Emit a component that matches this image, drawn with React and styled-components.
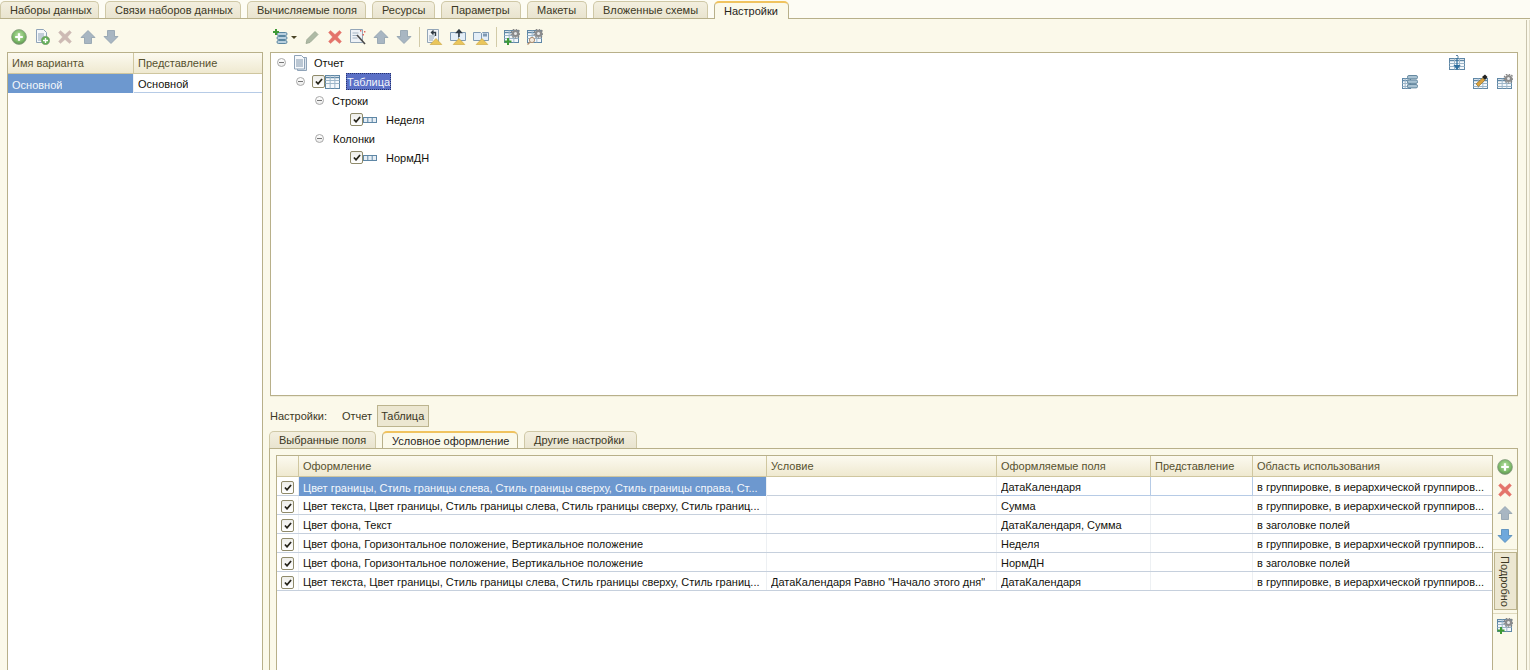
import styled, { createGlobalStyle } from 'styled-components';

const GlobalStyle = createGlobalStyle`
  html, body {
    margin: 0;
    padding: 0;
    background: #fbf9ea;
  }
`;

const Page = styled.div`
  width: 1530px;
  height: 670px;
  overflow: hidden;
  display: flex;
  flex-direction: column;
  background: #fbf9ea;
  color: #26241a;
  font-family: 'Liberation Sans', Arial, sans-serif;
  font-size: 11px;
`;

const TabStrip = styled.div`
  display: flex;
  align-items: flex-end;
  gap: 6px;
  height: ${(p) => (p.$inner ? 18 : 17)}px;
  padding-top: 1px;
  margin-left: ${(p) => (p.$inner ? -1 : 0)}px;
  box-sizing: content-box;
  border-bottom: ${(p) => (p.$inner ? 'none' : '1px solid #b8b08a')};
  background: ${(p) => (p.$inner ? 'transparent' : '#fdfcf4')};
`;

const Tab = styled.div`
  box-sizing: border-box;
  width: ${(p) => p.$w}px;
  height: ${(p) => (p.$active ? 18 : 17)}px;
  margin-bottom: ${(p) => (p.$active ? -1 : 0)}px;
  display: flex;
  align-items: center;
  padding-left: 9px;
  border: 1px solid #cfc8a6;
  border-bottom: none;
  border-radius: 5px 5px 0 0;
  white-space: nowrap;
  color: #3b3824;
  background: linear-gradient(#f3efdf, #e9e4cf);
  ${(p) =>
    p.$active &&
    `
    background: #fbf9ea;
    border-color: #b8b08a;
    border-top: 2px solid #f0c35f;
    color: #26241a;
  `}
`;

const Workspace = styled.div`
  flex: 1;
  min-height: 0;
  display: flex;
`;

const LeftPane = styled.div`
  width: 263px;
  flex: none;
  box-sizing: border-box;
  padding-left: 7px;
  display: flex;
  flex-direction: column;
`;

const RightPane = styled.div`
  width: 1248px;
  flex: none;
  margin-left: 7px;
  display: flex;
  flex-direction: column;
`;

const EdgeStrip = styled.div`
  width: 2px;
  flex: none;
  margin-left: 8px;
  margin-top: 1px;
  border-left: 1px solid #c9c4ad;
  border-right: 1px solid #e4e0cc;
`;

const Toolbar = styled.div`
  height: 33px;
  flex: none;
  box-sizing: border-box;
  padding: 10px 0 0 ${(p) => p.$left}px;
  display: flex;
  align-items: flex-start;
  gap: 7px;
`;

const ToolSeparator = styled.span`
  width: 1px;
  height: 20px;
  margin: -2px 0 0 0;
  background: #d2cba8;
`;

const Glyph = styled.svg`
  width: ${(p) => p.$w || 16}px;
  height: ${(p) => p.$h || 16}px;
  flex: none;
  display: block;
`;

const DropCaret = styled.span`
  width: 0;
  height: 0;
  margin: 7px 0 0 -5px;
  border-left: 3px solid transparent;
  border-right: 3px solid transparent;
  border-top: 3px solid #4a4526;
`;

const GridBox = styled.div`
  flex: 1;
  min-height: 0;
  border: 1px solid #b8b08a;
  border-bottom: none;
  background: #fff;
`;

const HeadRow = styled.div`
  display: grid;
  grid-template-columns: ${(p) => p.$cols};
  height: 21px;
  box-sizing: border-box;
  border-bottom: 1px solid #cfc69f;
  background: linear-gradient(#fcfaf0, #efe9d0);
`;

const HeadCell = styled.div`
  display: flex;
  align-items: center;
  padding: 0 0 1px 4px;
  color: #57512f;
  border-right: 1px solid #d0c7a0;
  white-space: nowrap;
  &:last-child {
    border-right: none;
  }
`;

const BodyRow = styled.div`
  display: grid;
  grid-template-columns: ${(p) => p.$cols};
  height: 19px;
  box-sizing: border-box;
  border-bottom: 1px solid #c6d0dd;
`;

const Cell = styled.div`
  display: flex;
  align-items: center;
  min-width: 0;
  padding: 2px 3px 0 4px;
  border-right: 1px solid #edf0f3;
  color: #14130c;
  background: ${(p) => (p.$selected ? '#6d98cf' : 'transparent')};
  ${(p) => p.$selected && 'color: #f4f7fb; margin-bottom: -1px;'}
  ${(p) => p.$current && 'border-right: 1px solid #b6cbe6; border-bottom: 1px solid #b6cbe6; margin-bottom: -1px;'}
  &:last-child {
    border-right: none;
  }
`;

const CellText = styled.span`
  display: block;
  min-width: 0;
  white-space: nowrap;
  overflow: hidden;
`;

const CheckCell = styled.div`
  display: flex;
  align-items: center;
  justify-content: center;
  padding-top: 2px;
  border-right: 1px solid #edf0f3;
`;

const CheckBox = styled.span`
  width: 13px;
  height: 13px;
  flex: none;
  box-sizing: border-box;
  display: flex;
  align-items: center;
  justify-content: center;
  border: 1px solid #8f8a6a;
  border-radius: 2px;
  background: linear-gradient(#eeeeea, #fff);
`;

const TreeBox = styled.div`
  height: 344px;
  flex: none;
  box-sizing: border-box;
  border: 1px solid #b8b08a;
  background: #fff;
`;

const TreeRow = styled.div`
  height: 19px;
  display: flex;
  align-items: center;
  padding-left: ${(p) => p.$indent}px;
  color: #14130c;
`;

const Expander = styled.span`
  width: 9px;
  height: 9px;
  flex: none;
  margin-right: ${(p) => p.$gap}px;
  box-sizing: border-box;
  border: 1px solid #a9a9a9;
  border-radius: 50%;
  background: linear-gradient(#fff, #ececec);
  display: flex;
  align-items: center;
  justify-content: center;
  &::after {
    content: '';
    width: 5px;
    height: 1px;
    background: #777;
  }
`;

const TreeLabel = styled.span`
  margin-left: ${(p) => p.$gap || 0}px;
  white-space: nowrap;
`;

const SelectedLabel = styled.span`
  margin-left: 5px;
  height: 17px;
  box-sizing: border-box;
  padding: 0 1px;
  display: flex;
  align-items: center;
  color: #f2f4fb;
  background: #5b70c6;
  outline: 1px dotted #26336e;
  outline-offset: -1px;
`;

const TreeTools = styled.div`
  margin-left: auto;
  padding-right: ${(p) => p.$right}px;
  display: flex;
`;

const ToolSpacer = styled.span`
  width: ${(p) => p.$w}px;
`;

const SettingsRow = styled.div`
  height: 33px;
  flex: none;
  box-sizing: border-box;
  padding-top: 5px;
  display: flex;
  align-items: center;
  border-top: 1px solid #efecd9;
`;

const SettingsLabel = styled.span`
  width: 69px;
  color: #3b3824;
`;

const SettingsItem = styled.span`
  height: 22px;
  box-sizing: border-box;
  display: flex;
  align-items: center;
  padding: 0 3px;
  margin-right: ${(p) => (p.$on ? 0 : 2)}px;
  color: #3b3824;
  ${(p) => p.$on && 'width: 52px; background: #ece7d1; border: 1px solid #bcb48e;'}
`;

const FormPanel = styled.div`
  flex: 1;
  min-height: 0;
  display: flex;
  box-sizing: border-box;
  margin-left: -1px;
  padding: 6px 0 0 6px;
  border: 1px solid #b8b08a;
  border-bottom: none;
`;

const FormTable = styled(GridBox)`
  width: 1215px;
  flex: none;
`;

const SideBar = styled.div`
  flex: 1;
  display: flex;
  flex-direction: column;
  align-items: center;
  padding-top: 4px;
  gap: 7px;
`;

const SideRule = styled.span`
  width: 24px;
  height: 1px;
  flex: none;
  margin: -2px 0 ${(p) => p.$after}px;
  background: #dfd9bd;
`;

const DetailButton = styled.div`
  width: 23px;
  height: 58px;
  flex: none;
  margin-bottom: -2px;
  box-sizing: border-box;
  display: flex;
  align-items: center;
  justify-content: center;
  border: 1px solid #bcb48e;
  background: #ece7d1;
  color: #3b3824;
  writing-mode: vertical-rl;
`;

const Cross = ({ fill = '#e4736a' }) => (
  <Glyph viewBox="0 0 16 16">
    <path
      d="M3.5 1.5 8 5.5l4.5-4 2 2-4 4.5 4 4.5-2 2-4.5-4-4.5 4-2-2 4-4.5-4-4.5z"
      fill={fill}
      stroke={fill}
      strokeOpacity="0.6"
      strokeWidth="0.6"
    />
  </Glyph>
);

const Arrow = ({ up, fill = '#a8b6c2', edge = '#8d9eac' }) => (
  <Glyph viewBox="0 0 16 16">
    <path
      d={up ? 'M8 1.5 15 8.5h-3.5v6h-7v-6H1z' : 'M8 14.5 15 7.5h-3.5v-6h-7v6H1z'}
      fill={fill}
      stroke={edge}
      strokeWidth="0.8"
    />
  </Glyph>
);

const GreenPlus = () => (
  <Glyph viewBox="0 0 16 16">
    <defs>
      <radialGradient id="gp" cx="0.5" cy="0.4" r="0.6">
        <stop offset="0" stopColor="#bfe3a8" />
        <stop offset="0.7" stopColor="#79b866" />
        <stop offset="1" stopColor="#5d8f50" />
      </radialGradient>
    </defs>
    <circle cx="8" cy="8" r="7.4" fill="url(#gp)" stroke="#8a9c84" strokeWidth="0.8" />
    <path d="M6.9 4.2h2.2v2.7h2.7v2.2H9.1v2.7H6.9V9.1H4.2V6.9h2.7z" fill="#fff" />
  </Glyph>
);

const DocLines = () => (
  <>
    <path d="M2.5.5h7l3 3v10h-10z" fill="#f5f8fb" stroke="#8fa3b8" />
    <path d="M4 5h6M4 7h6M4 9h6M4 11h5" stroke="#8fa3b8" />
  </>
);

const DocAdd = () => (
  <Glyph viewBox="0 0 16 16">
    <DocLines />
    <circle cx="11.5" cy="11.5" r="4.2" fill="#62ad58" stroke="#7d9d75" strokeWidth="0.6" />
    <path d="M11.5 9v5M9 11.5h5" stroke="#fff" strokeWidth="1.4" />
  </Glyph>
);

const Report = () => (
  <Glyph viewBox="0 0 16 16">
    <path d="M4.5 2.5h9v13h-9z" fill="#dde6ef" stroke="#8fa3b8" />
    <path d="M1.5.5h7l3 3v10.5h-10z" fill="#f7f9fc" stroke="#8fa3b8" />
    <path d="M3 5h7M3 7h7M3 9h7M3 11h7" stroke="#7f95ab" />
  </Glyph>
);

const Pencil = () => (
  <Glyph viewBox="0 0 16 16">
    <path d="M11 2.5 14 5.5 6 13.5 2 14.5 3 10.5z" fill="#aebaa5" stroke="#98a58f" strokeWidth="0.8" />
  </Glyph>
);

const Wizard = () => (
  <Glyph viewBox="0 0 16 16">
    <path d="M.5.5h12v13H.5z" fill="#eef2f6" stroke="#93a6b8" />
    <path d="M2.5 4h6M2.5 6.5h5M2.5 9h5" stroke="#a4b5c4" />
    <path d="M7 6l8 9" stroke="#4a4a4a" strokeWidth="1.6" />
    <path d="M10 1h1.4v1.4H10zM14 2h1.4v1.4H14zM12.5 5H14v1.4h-1.5z" fill="#e2685f" />
  </Glyph>
);

const Bars = ({ x = 4 }) => (
  <g fill="#b9d0df" stroke="#4d7c99" strokeWidth="0.9">
    <rect x={x} y="3.5" width="10" height="3" rx="1.4" />
    <rect x={x} y="7.5" width="10" height="3" rx="1.4" />
    <rect x={x} y="11.5" width="10" height="3" rx="1.4" />
  </g>
);

const TreeAdd = () => (
  <Glyph viewBox="0 0 16 16">
    <Bars />
    <path d="M3 0v6M0 3h6" stroke="#3e9a35" strokeWidth="2" />
  </Glyph>
);

const Warning = () => <path d="M9 9.5l5.8 6H3.2z" fill="#eac65b" stroke="#c9a33d" strokeWidth="0.6" />;

const DocBack = () => (
  <Glyph viewBox="0 0 16 16">
    <path d="M.5.5h11v13H.5z" fill="#f2f5f8" stroke="#93a6b8" />
    <path d="M2 7h6M2 9h5M2 11h4" stroke="#93a6b8" />
    <path d="M8.5 7V3.5H5M6.5 1.5l-2 2 2 2" fill="none" stroke="#2f3a44" strokeWidth="1.4" />
    <Warning />
  </Glyph>
);

const Book = () => (
  <path d="M.5 3.5h7l1 1 1-1h6v8h-15zM8.5 4.5v7" fill="#e4eef7" stroke="#7f9ab3" />
);

const BookLoad = () => (
  <Glyph viewBox="0 0 16 16">
    <Book />
    <path d="M9 8V2M6.8 3.6 9 1l2.2 2.6z" stroke="#2f3a44" strokeWidth="1.5" fill="#2f3a44" />
    <Warning />
  </Glyph>
);

const BookSave = () => (
  <Glyph viewBox="0 0 16 16">
    <Book />
    <path d="M10 4.5h4v3h-4z" fill="#7f9ab3" />
    <Warning />
  </Glyph>
);

const MiniTable = ({ x = 0.5, y = 3.5, w = 12, h = 11 }) => (
  <g>
    <rect x={x} y={y} width={w} height={h} fill="#f4f8fb" stroke="#5f87a6" />
    <path d={`M${x} ${y + 2}h${w}`} stroke="#5f87a6" strokeWidth="1.4" />
    <path d={`M${x + w / 3} ${y}v${h}M${x + (2 * w) / 3} ${y}v${h}M${x} ${y + 5}h${w}M${x} ${y + 8}h${w}`} stroke="#9db6c9" />
  </g>
);

const Gear = ({ cx = 11.5, cy = 4.5 }) => (
  <g>
    <circle cx={cx} cy={cy} r="4.4" fill="none" stroke="#858585" strokeWidth="1.3" strokeDasharray="1.7 1.2" />
    <circle cx={cx} cy={cy} r="3.6" fill="#8b8b8b" />
    <circle cx={cx} cy={cy} r="1.5" fill="#e8e8e8" />
  </g>
);

const GearAdd = () => (
  <Glyph viewBox="0 0 16 16">
    <MiniTable x={0.5} y={1.5} w={14} h={12} />
    <Gear />
    <path d="M4 9v7M.5 12.5h7" stroke="#3e9a35" strokeWidth="2" />
  </Glyph>
);

const GearFind = () => (
  <Glyph viewBox="0 0 16 16">
    <MiniTable x={0.5} y={1.5} w={14} h={12} />
    <Gear />
    <circle cx="5" cy="11" r="2.6" fill="#f2e9dc" stroke="#b08f70" />
    <path d="M3 13l-2.5 2.5" stroke="#b08f70" strokeWidth="1.4" />
  </Glyph>
);

const TableIcon = () => (
  <Glyph viewBox="0 0 16 16">
    <MiniTable x={0.5} y={1.5} w={14} h={13} />
  </Glyph>
);

const FieldIcon = () => (
  <Glyph $w={14} $h={6} viewBox="0 0 14 6">
    <rect x="0.5" y="0.5" width="13" height="5" fill="#e6eef5" stroke="#5f87a6" />
    <path d="M4.8 0v6M9.2 0v6" stroke="#5f87a6" />
  </Glyph>
);

const TableDown = () => (
  <Glyph viewBox="0 0 16 16">
    <MiniTable x={0.5} y={3.5} w={15} h={11} />
    <path d="M8 3v10M5.5 10.5 8 14l2.5-3.5z" stroke="#2f6f9f" strokeWidth="1.2" fill="#2f6f9f" />
    <path d="M7 0h2v1H7zM8 1.5h2v1H8z" fill="#5f87a6" />
  </Glyph>
);

const TableBars = () => (
  <Glyph viewBox="0 0 16 16">
    <MiniTable x={0.5} y={4.5} w={8} h={10} />
    <g fill="#a9c2d2" stroke="#5a8098" strokeWidth="0.9">
      <rect x="5.5" y="1.5" width="10" height="3.4" rx="1.4" />
      <rect x="5.5" y="6" width="10" height="3.4" rx="1.4" />
      <rect x="5.5" y="10.5" width="10" height="3.4" rx="1.4" />
    </g>
  </Glyph>
);

const TablePen = () => (
  <Glyph viewBox="0 0 16 16">
    <MiniTable x={0.5} y={4.5} w={14} h={10} />
    <path d="M9 3l3-2.5 2.5 2.5L12 6z" fill="#222" />
    <path d="M9.5 4 3 10l2.5 2.5L12 6z" fill="#d9a13c" stroke="#8d6a22" strokeWidth="0.6" />
  </Glyph>
);

const TableGear = () => (
  <Glyph viewBox="0 0 16 16">
    <MiniTable x={0.5} y={4.5} w={14} h={10} />
    <Gear cx={11.5} cy={4.5} />
  </Glyph>
);

const Tick = () => (
  <svg width="8" height="7" viewBox="0 0 9 8">
    <path d="M1 4l2.4 2.6L8 1.2" fill="none" stroke="#26241a" strokeWidth="2" />
  </svg>
);

const mainTabs = [
  ['Наборы данных', 99],
  ['Связи наборов данных', 136],
  ['Вычисляемые поля', 119],
  ['Ресурсы', 63],
  ['Параметры', 80],
  ['Макеты', 60],
  ['Вложенные схемы', 115],
];

const innerTabs = [
  ['Выбранные поля', 107],
  ['Условное оформление', 136, true],
  ['Другие настройки', 113],
];

const formCols = '22px 468px 230px 154px 102px 1fr';

const formRows = [
  ['Цвет границы, Стиль границы слева, Стиль границы сверху, Стиль границы справа, Ст...', '', 'ДатаКалендаря', 'в группировке, в иерархической группиров...'],
  ['Цвет текста, Цвет границы, Стиль границы слева, Стиль границы сверху, Стиль границ...', '', 'Сумма', 'в группировке, в иерархической группиров...'],
  ['Цвет фона, Текст', '', 'ДатаКалендаря, Сумма', 'в заголовке полей'],
  ['Цвет фона, Горизонтальное положение, Вертикальное положение', '', 'Неделя', 'в группировке, в иерархической группиров...'],
  ['Цвет фона, Горизонтальное положение, Вертикальное положение', '', 'НормДН', 'в заголовке полей'],
  ['Цвет текста, Цвет границы, Стиль границы слева, Стиль границы сверху, Стиль границ...', 'ДатаКалендаря Равно "Начало этого дня"', 'ДатаКалендаря', 'в группировке, в иерархической группиров...'],
];

const App = () => (
  <Page>
    <GlobalStyle />
    <TabStrip>
      {mainTabs.map(([name, w]) => (
        <Tab key={name} $w={w}>{name}</Tab>
      ))}
      <Tab $w={75} $active>Настройки</Tab>
    </TabStrip>
    <Workspace>
      <LeftPane>
        <Toolbar $left={4}>
          <GreenPlus />
          <DocAdd />
          <Cross fill="#cdbab4" />
          <Arrow up />
          <Arrow />
        </Toolbar>
        <GridBox>
          <HeadRow $cols="126px 1fr">
            <HeadCell>Имя варианта</HeadCell>
            <HeadCell>Представление</HeadCell>
          </HeadRow>
          <BodyRow $cols="126px 1fr">
            <Cell $selected><CellText>Основной</CellText></Cell>
            <Cell $current><CellText>Основной</CellText></Cell>
          </BodyRow>
        </GridBox>
      </LeftPane>

      <RightPane>
        <Toolbar $left={3}>
          <TreeAdd />
          <DropCaret />
          <Pencil />
          <Cross />
          <Wizard />
          <Arrow up />
          <Arrow />
          <ToolSeparator />
          <DocBack />
          <BookLoad />
          <BookSave />
          <ToolSeparator />
          <GearAdd />
          <GearFind />
        </Toolbar>

        <TreeBox>
          <TreeRow $indent={6}>
            <Expander $gap={7} />
            <Report />
            <TreeLabel $gap={5}>Отчет</TreeLabel>
            <TreeTools $right={52}><TableDown /></TreeTools>
          </TreeRow>
          <TreeRow $indent={25}>
            <Expander $gap={7} />
            <CheckBox><Tick /></CheckBox>
            <TableIcon />
            <SelectedLabel>Таблица</SelectedLabel>
            <TreeTools $right={4}>
              <TableBars />
              <ToolSpacer $w={55} />
              <TablePen />
              <ToolSpacer $w={8} />
              <TableGear />
            </TreeTools>
          </TreeRow>
          <TreeRow $indent={44}>
            <Expander $gap={8} />
            <TreeLabel>Строки</TreeLabel>
          </TreeRow>
          <TreeRow $indent={79}>
            <CheckBox><Tick /></CheckBox>
            <FieldIcon />
            <TreeLabel $gap={9}>Неделя</TreeLabel>
          </TreeRow>
          <TreeRow $indent={44}>
            <Expander $gap={9} />
            <TreeLabel>Колонки</TreeLabel>
          </TreeRow>
          <TreeRow $indent={79}>
            <CheckBox><Tick /></CheckBox>
            <FieldIcon />
            <TreeLabel $gap={9}>НормДН</TreeLabel>
          </TreeRow>
        </TreeBox>

        <SettingsRow>
          <SettingsLabel>Настройки:</SettingsLabel>
          <SettingsItem>Отчет</SettingsItem>
          <SettingsItem $on>Таблица</SettingsItem>
        </SettingsRow>

        <TabStrip $inner>
          {innerTabs.map(([name, w, active]) => (
            <Tab key={name} $w={w} $active={active}>{name}</Tab>
          ))}
        </TabStrip>

        <FormPanel>
          <FormTable>
            <HeadRow $cols={formCols}>
              <HeadCell />
              <HeadCell>Оформление</HeadCell>
              <HeadCell>Условие</HeadCell>
              <HeadCell>Оформляемые поля</HeadCell>
              <HeadCell>Представление</HeadCell>
              <HeadCell>Область использования</HeadCell>
            </HeadRow>
            {formRows.map(([look, cond, fields, area], i) => (
              <BodyRow key={i} $cols={formCols}>
                <CheckCell><CheckBox><Tick /></CheckBox></CheckCell>
                <Cell $selected={i === 0}><CellText>{look}</CellText></Cell>
                <Cell><CellText>{cond}</CellText></Cell>
                <Cell $current={i === 0}><CellText>{fields}</CellText></Cell>
                <Cell $current={i === 0} />
                <Cell><CellText>{area}</CellText></Cell>
              </BodyRow>
            ))}
          </FormTable>
          <SideBar>
            <GreenPlus />
            <Cross />
            <Arrow up />
            <Arrow fill="#6fa8dc" edge="#4f86b8" />
            <SideRule $after={-5} />
            <DetailButton>Подробно</DetailButton>
            <SideRule $after={-3} />
            <GearAdd />
          </SideBar>
        </FormPanel>
      </RightPane>
      <EdgeStrip />
    </Workspace>
  </Page>
);

export default App;
